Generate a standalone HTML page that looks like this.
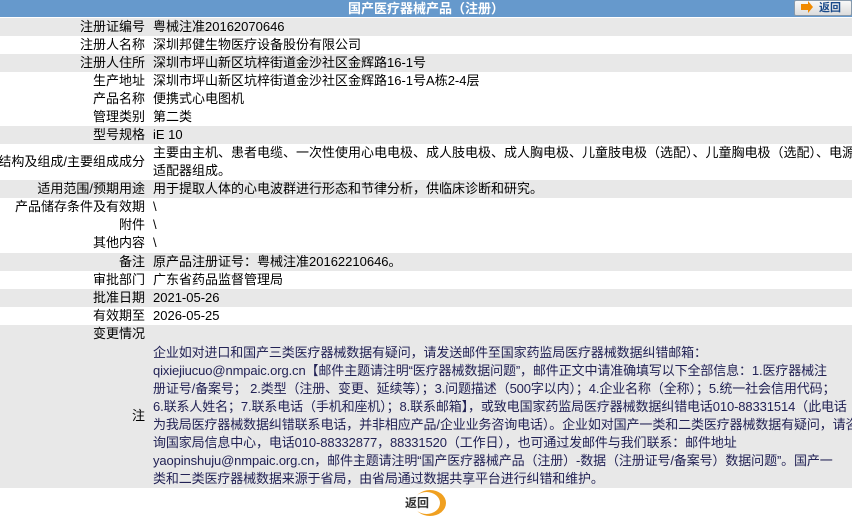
<!DOCTYPE html>
<html><head><meta charset="utf-8"><style>
body{margin:0;width:854px;height:516px;background:#fff;font-family:"Liberation Sans","Noto Sans CJK SC",sans-serif;font-size:13px;color:#000;position:relative;overflow:hidden}
.hd{position:absolute;left:0;top:0;width:852px;height:17px;background:#6699cc;color:#fff;font-weight:bold;text-align:center;line-height:17px;font-size:13px}
.btn{position:absolute;left:794px;top:0;width:56px;height:14px;background:linear-gradient(#f8f8f8,#dcdcdc);border:1px solid #8899aa;border-radius:2px;font-size:11px;font-weight:bold;color:#1a4a8a;line-height:14px}
.btn i{position:absolute;left:6px;top:3px;width:7px;height:6px;background:#f08a00}
.btn i:after{content:"";position:absolute;left:7px;top:-3px;border:6px solid transparent;border-left:5px solid #f08a00;border-right:0}
.btn span{position:absolute;left:24px;top:0}
.r{position:absolute;left:0;width:852px;height:18px;line-height:18px;overflow:hidden}
.g{background:#e8e8e8}
.l{position:absolute;right:707px;white-space:nowrap}
.v{position:absolute;left:153px;white-space:nowrap}
.n{color:#222255;letter-spacing:-0.12px}
</style></head><body>
<div class="hd">国产医疗器械产品（注册）</div>
<div class="btn"><i></i><span>返回</span></div>
<div class="r g" style="top:18px"><span class="l">注册证编号</span><span class="v">粤械注准20162070646</span></div>
<div class="r" style="top:36px"><span class="l">注册人名称</span><span class="v">深圳邦健生物医疗设备股份有限公司</span></div>
<div class="r g" style="top:54px"><span class="l">注册人住所</span><span class="v">深圳市坪山新区坑梓街道金沙社区金辉路16-1号</span></div>
<div class="r" style="top:72px"><span class="l">生产地址</span><span class="v">深圳市坪山新区坑梓街道金沙社区金辉路16-1号A栋2-4层</span></div>
<div class="r" style="top:90px"><span class="l">产品名称</span><span class="v">便携式心电图机</span></div>
<div class="r" style="top:108px"><span class="l">管理类别</span><span class="v">第二类</span></div>
<div class="r g" style="top:126px"><span class="l">型号规格</span><span class="v">iE 10</span></div>
<div class="r" style="top:144px;height:36px"><span class="l" style="top:9px">结构及组成/主要组成成分</span><span class="v">主要由主机、患者电缆、一次性使用心电电极、成人肢电极、成人胸电极、儿童肢电极（选配）、儿童胸电极（选配）、电源<br>适配器组成。</span></div>
<div class="r g" style="top:180px"><span class="l">适用范围/预期用途</span><span class="v">用于提取人体的心电波群进行形态和节律分析，供临床诊断和研究。</span></div>
<div class="r" style="top:198px"><span class="l">产品储存条件及有效期</span><span class="v">\</span></div>
<div class="r" style="top:216px"><span class="l">附件</span><span class="v">\</span></div>
<div class="r" style="top:234px"><span class="l">其他内容</span><span class="v">\</span></div>
<div class="r g" style="top:253px"><span class="l">备注</span><span class="v">原产品注册证号：粤械注准20162210646。</span></div>
<div class="r" style="top:271px"><span class="l">审批部门</span><span class="v">广东省药品监督管理局</span></div>
<div class="r g" style="top:289px"><span class="l">批准日期</span><span class="v">2021-05-26</span></div>
<div class="r" style="top:307px"><span class="l">有效期至</span><span class="v">2026-05-25</span></div>
<div class="r g" style="top:325px;height:163px"><span class="l">变更情况</span><span class="l" style="top:82px">注</span>
<div class="v n" style="top:19px">企业如对进口和国产三类医疗器械数据有疑问，请发送邮件至国家药监局医疗器械数据纠错邮箱：<br>qixiejiucuo@nmpaic.org.cn【邮件主题请注明“医疗器械数据问题”，邮件正文中请准确填写以下全部信息：1.医疗器械注<br>册证号/备案号； 2.类型（注册、变更、延续等）；3.问题描述（500字以内）；4.企业名称（全称）；5.统一社会信用代码；<br>6.联系人姓名；7.联系电话（手机和座机）；8.联系邮箱】，或致电国家药监局医疗器械数据纠错电话010-88331514（此电话<br>为我局医疗器械数据纠错联系电话，并非相应产品/企业业务咨询电话）。企业如对国产一类和二类医疗器械数据有疑问，请咨<br>询国家局信息中心，电话010-88332877，88331520（工作日），也可通过发邮件与我们联系：邮件地址<br>yaopinshuju@nmpaic.org.cn，邮件主题请注明“国产医疗器械产品（注册）-数据（注册证号/备案号）数据问题”。国产一<br>类和二类医疗器械数据来源于省局，由省局通过数据共享平台进行纠错和维护。</div></div>
<div style="position:absolute;left:414px;top:490px;width:32px;height:26px;border-radius:50%;background:#f0a020"></div>
<div style="position:absolute;left:413px;top:492px;width:27px;height:22px;border-radius:50%;background:#fff"></div>
<div style="position:absolute;left:405px;top:495px;font-size:12px;font-weight:bold;color:#333;line-height:16px">返回</div>
</body></html>
